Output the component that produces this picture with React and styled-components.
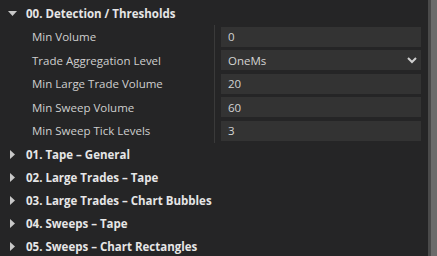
import React from "react";
import styled, { createGlobalStyle } from "styled-components";

const Global = createGlobalStyle`
  html, body { margin: 0; padding: 0; background: #252526; }
  body { font-family: "Open Sans", "Noto Sans", sans-serif; }
`;

const Frame = styled.div`
  width: 437px;
  height: 256px;
  display: flex;
  overflow: hidden;
  background: #252526;
`;

const List = styled.div`
  flex: 1;
  padding-top: 2px;
`;

const Scrollbar = styled.div`
  width: 9px;
  display: flex;
  background: #4a4a4a;
`;

const Thumb = styled.div`
  margin-left: 3px;
  flex: 1;
  background: #6b6b6b;
`;

const Header = styled.div`
  height: 23px;
  display: flex;
  align-items: center;
  color: #e6e6e6;
  font-size: 11.5px;
  font-weight: 700;
`;

const Caret = styled.span`
  width: 26px;
  display: flex;
  padding-left: ${(p) => (p.open ? "8px" : "10px")};
  box-sizing: border-box;
`;

const Body = styled.div`
  display: flex;
  flex-direction: column;
`;

const Row = styled.div`
  height: 23.5px;
  display: grid;
  grid-template-columns: 214px 1px 1fr;
  align-items: center;
`;

const Label = styled.div`
  padding-left: 32px;
  color: #cfcfcf;
  font-size: 11.5px;
`;

const Guide = styled.div`
  align-self: stretch;
  background: #3a3a3a;
`;

const Value = styled.div`
  margin-left: 6px;
  width: 200px;
  height: 20px;
  box-sizing: border-box;
  background: #333333;
  display: flex;
  align-items: center;
  justify-content: space-between;
  padding: 0 4px 0 7px;
  color: #d4d4d4;
  font-size: 11.5px;
`;

const Down = () => (
  <svg width="9" height="6" viewBox="0 0 9 6">
    <polygon points="0,0 9,0 4.5,5" fill="#c8c8c8" />
  </svg>
);

const Right = () => (
  <svg width="5" height="9" viewBox="0 0 5 9">
    <polygon points="0,0 5,4.5 0,9" fill="#c8c8c8" />
  </svg>
);

const Chevron = () => (
  <svg width="10" height="7" viewBox="0 0 10 7">
    <polyline points="1,1 5,5 9,1" fill="none" stroke="#d0d0d0" strokeWidth="2" />
  </svg>
);

const props = [
  ["Min Volume", "0"],
  ["Trade Aggregation Level", "OneMs", true],
  ["Min Large Trade Volume", "20"],
  ["Min Sweep Volume", "60"],
  ["Min Sweep Tick Levels", "3"],
];

const sections = [
  "01. Tape – General",
  "02. Large Trades – Tape",
  "03. Large Trades – Chart Bubbles",
  "04. Sweeps – Tape",
  "05. Sweeps – Chart Rectangles",
];

export default function App() {
  return (
    <Frame>
      <Global />
      <List>
        <Header>
          <Caret open>
            <Down />
          </Caret>
          00. Detection / Thresholds
        </Header>
        <Body>
          {props.map(([label, value, select]) => (
            <Row key={label}>
              <Label>{label}</Label>
              <Guide />
              <Value>
                {value}
                {select && <Chevron />}
              </Value>
            </Row>
          ))}
        </Body>
        {sections.map((s) => (
          <Header key={s}>
            <Caret>
              <Right />
            </Caret>
            {s}
          </Header>
        ))}
      </List>
      <Scrollbar>
        <Thumb />
      </Scrollbar>
    </Frame>
  );
}
